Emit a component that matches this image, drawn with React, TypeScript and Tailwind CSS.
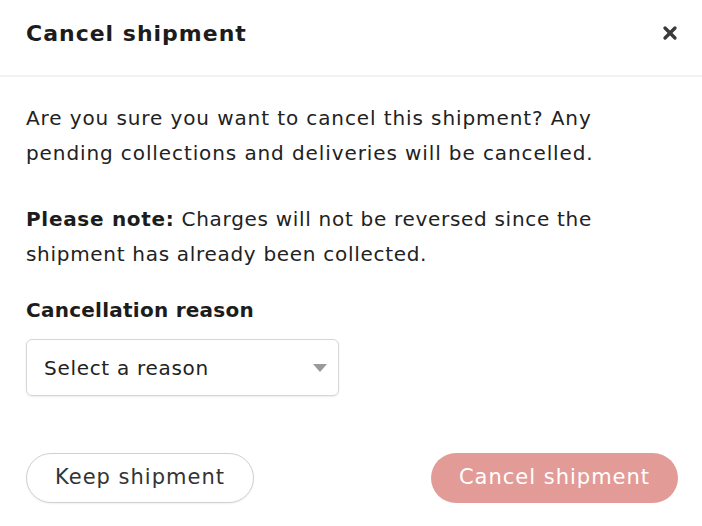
import { X } from 'lucide-react'

const font = { fontFamily: '"DejaVu Sans", sans-serif' }

export default function App() {
  return (
    <div className="w-[702px] h-[526px] bg-white text-[#1c1c1c]" style={font}>
      <div className="h-[77px] flex items-start justify-between pt-[19px] pl-[26px] pr-[22px] border-b-2 border-[#f2f2f2]">
        <h2 className="text-[22px] leading-[30px] font-semibold tracking-[1px]">Cancel shipment</h2>
        <X className="w-[20px] h-[20px] mt-[4px] text-[#3a3a3a]" strokeWidth={4} />
      </div>
      <div className="px-[26px] pt-[24px]">
        <p className="text-[20px] leading-[35px] tracking-[0.9px] text-[#222]">
          Are you sure you want to cancel this shipment? Any
          <br />
          pending collections and deliveries will be cancelled.
        </p>
        <p className="text-[20px] leading-[35px] tracking-[0.7px] text-[#222] mt-[31px]">
          <span className="font-bold text-[#1c1c1c]">Please note:</span> Charges will not be reversed since the
          <br />
          shipment has already been collected.
        </p>
        <div className="mt-[23px] text-[20px] leading-[30px] font-bold tracking-[0.25px]">Cancellation reason</div>
        <div className="mt-[14px] w-[313px] h-[57px] border border-[#d6d6d6] rounded-[6px] flex items-center justify-between pl-[17px] pr-[11px] shadow-[0_1px_2px_rgba(0,0,0,0.08)]">
          <span className="text-[20px] tracking-[0.7px] text-[#222]">Select a reason</span>
          <svg width="14" height="8" viewBox="0 0 14 8">
            <path d="M0 0 L14 0 L7 8 Z" fill="#9a9a9a" />
          </svg>
        </div>
        <div className="mt-[57px] flex items-center justify-between">
          <button className="w-[228px] h-[50px] rounded-full border border-[#d0d0d0] bg-white text-[21px] tracking-[1px] text-[#333] shadow-[0_1px_2px_rgba(0,0,0,0.06)]">
            Keep shipment
          </button>
          <button className="w-[247px] h-[50px] rounded-full bg-[#e39b97] text-[21px] tracking-[1px] text-white mr-[-2px]">
            Cancel shipment
          </button>
        </div>
      </div>
    </div>
  )
}
